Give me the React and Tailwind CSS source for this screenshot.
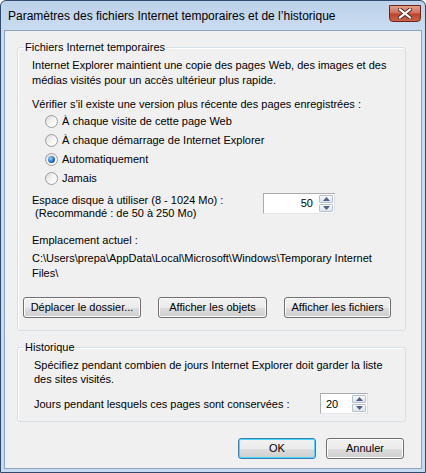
import React, { useState } from 'react';

const Radio = ({ checked, label, onClick }) => (
  <div className="h-[19px] flex items-center pl-[13px] gap-[4px] cursor-default" onClick={onClick}>
    <span className="w-[13px] h-[13px] rounded-full border border-[#9c9c9c] bg-gradient-to-br from-[#dcdcdc] via-[#f4f4f4] to-[#ffffff] flex items-center justify-center shrink-0">
      {checked && (
        <span className="w-[7px] h-[7px] rounded-full bg-[radial-gradient(circle_at_35%_35%,#9fd0ff,#1b67c4_60%,#0b3f86)]" />
      )}
    </span>
    <span>{label}</span>
  </div>
);

const Spinner = ({ value, width, align }) => (
  <div className={`${width} h-[21px] flex bg-white border border-[#abadb3] border-r-[#dbdfe6] border-b-[#e3e9ef]`}>
    <div className={`flex-1 flex items-center px-[5px] ${align}`}>{value}</div>
    <div className="w-[16px] flex flex-col gap-px p-px">
      <div className="flex-1 rounded-[1px] border border-[#b8c2cc] bg-gradient-to-b from-[#fbfbfb] to-[#dfe3e8] flex items-center justify-center">
        <svg width="7" height="4" viewBox="0 0 7 4"><path d="M0 4L3.5 0L7 4Z" fill="#4d6185" /></svg>
      </div>
      <div className="flex-1 rounded-[1px] border border-[#b8c2cc] bg-gradient-to-b from-[#fbfbfb] to-[#dfe3e8] flex items-center justify-center">
        <svg width="7" height="4" viewBox="0 0 7 4"><path d="M0 0L3.5 4L7 0Z" fill="#4d6185" /></svg>
      </div>
    </div>
  </div>
);

const Button = ({ children, width, focused }) => (
  <button
    className={`${width} h-[21px] rounded-[3px] border ${
      focused ? 'border-[#3c7fb1] shadow-[inset_0_0_0_1px_#48d8fb]' : 'border-[#707070] shadow-[inset_0_0_0_1px_#fcfcfc]'
    } bg-[linear-gradient(#f2f2f2_0%,#ebebeb_50%,#dddddd_51%,#cfcfcf_100%)] text-black text-[11px] leading-none flex items-center justify-center`}
  >
    {children}
  </button>
);

export default function App() {
  const [mode, setMode] = useState(2);

  const options = [
    'À chaque visite de cette page Web',
    'À chaque démarrage de Internet Explorer',
    'Automatiquement',
    'Jamais',
  ];

  return (
    <div className="w-[426px] h-[473px] rounded-t-[6px] border border-[#2f4a6a] bg-[linear-gradient(#bcd2ea_0px,#cadcf0_30px,#c8daef_100%)] flex flex-col font-['Liberation_Sans',Arial,sans-serif] text-black overflow-hidden">
      {/* Title bar */}
      <div className="h-[29px] shrink-0 flex items-start justify-between pl-[7px] pr-[4px]">
        <div className="text-[12px] pt-[8px] leading-[14px] text-black">
          Paramètres des fichiers Internet temporaires et de l’historique
        </div>
        <div className="mt-[4px] w-[32px] h-[17px] rounded-b-[4px] border border-[#6b2619] bg-[linear-gradient(#e3a08c_0%,#d0705a_45%,#bd4329_55%,#c9654a_100%)] flex items-center justify-center">
          <svg width="14" height="11" viewBox="0 0 14 11">
            <path d="M2 1.5L12 9.5M12 1.5L2 9.5" stroke="#4a2a24" strokeWidth="4" strokeLinecap="square" />
            <path d="M2 1.5L12 9.5M12 1.5L2 9.5" stroke="#ffffff" strokeWidth="2.2" strokeLinecap="square" />
          </svg>
        </div>
      </div>

      {/* Client area */}
      <div className="flex-1 mx-[3px] mb-[3px] bg-[#f0f0f0] border border-[#8aa3bf] pl-[12px] pr-[15px] pt-[10px] text-[11px]">
        <fieldset className="border border-[#d5dfe5] rounded-[3px] shadow-[inset_1px_1px_0_#ffffff]">
          <legend className="ml-[6px] px-[1px] leading-[13px]">Fichiers Internet temporaires</legend>
          <div className="pl-[14px] pr-[12px] pt-[4px] pb-[12px] leading-[15px]">
            <div className="whitespace-nowrap">Internet Explorer maintient une copie des pages Web, des images et des</div>
            <div className="whitespace-nowrap">médias visités pour un accès ultérieur plus rapide.</div>
            <div className="mt-[9px]">Vérifier s’il existe une version plus récente des pages enregistrées :</div>
            <div>
              {options.map((o, i) => (
                <Radio key={i} label={o} checked={mode === i} onClick={() => setMode(i)} />
              ))}
            </div>
            <div className="mt-[6px] flex items-start justify-between leading-[13px]">
              <div>
                <div>Espace disque à utiliser (8 - 1024 Mo) :</div>
                <div>&nbsp;(Recommandé : de 50 à 250 Mo)</div>
              </div>
              <div className="mr-[58px] -mt-[1px]">
                <Spinner value="50" width="w-[72px]" align="justify-end" />
              </div>
            </div>
            <div className="mt-[13px]">Emplacement actuel :</div>
            <div className="mt-[3px]">
              <div className="whitespace-nowrap">C:\Users\prepa\AppData\Local\Microsoft\Windows\Temporary Internet</div>
              <div>Files\</div>
            </div>
            <div className="mt-[16px] -ml-[9px] flex gap-[17px]">
              <Button width="w-[118px]">Déplacer le dossier...</Button>
              <Button width="w-[109px]">Afficher les objets</Button>
              <Button width="w-[107px]">Afficher les fichiers</Button>
            </div>
          </div>
        </fieldset>

        <fieldset className="mt-[10px] border border-[#d5dfe5] rounded-[3px] shadow-[inset_1px_1px_0_#ffffff]">
          <legend className="ml-[6px] px-[1px] leading-[13px]">Historique</legend>
          <div className="pl-[16px] pr-[12px] pt-[4px] pb-[7px] leading-[14px]">
            <div className="whitespace-nowrap">Spécifiez pendant combien de jours Internet Explorer doit garder la liste</div>
            <div>des sites visités.</div>
            <div className="mt-[7px] flex items-center">
              <div className="w-[286px]">Jours pendant lesquels ces pages sont conservées :</div>
              <Spinner value="20" width="w-[48px]" align="justify-start" />
            </div>
          </div>
        </fieldset>

        <div className="mt-[16px] flex justify-end gap-[10px] pr-[2px]">
          <Button width="w-[78px]" focused>OK</Button>
          <Button width="w-[78px]">Annuler</Button>
        </div>
      </div>
    </div>
  );
}
